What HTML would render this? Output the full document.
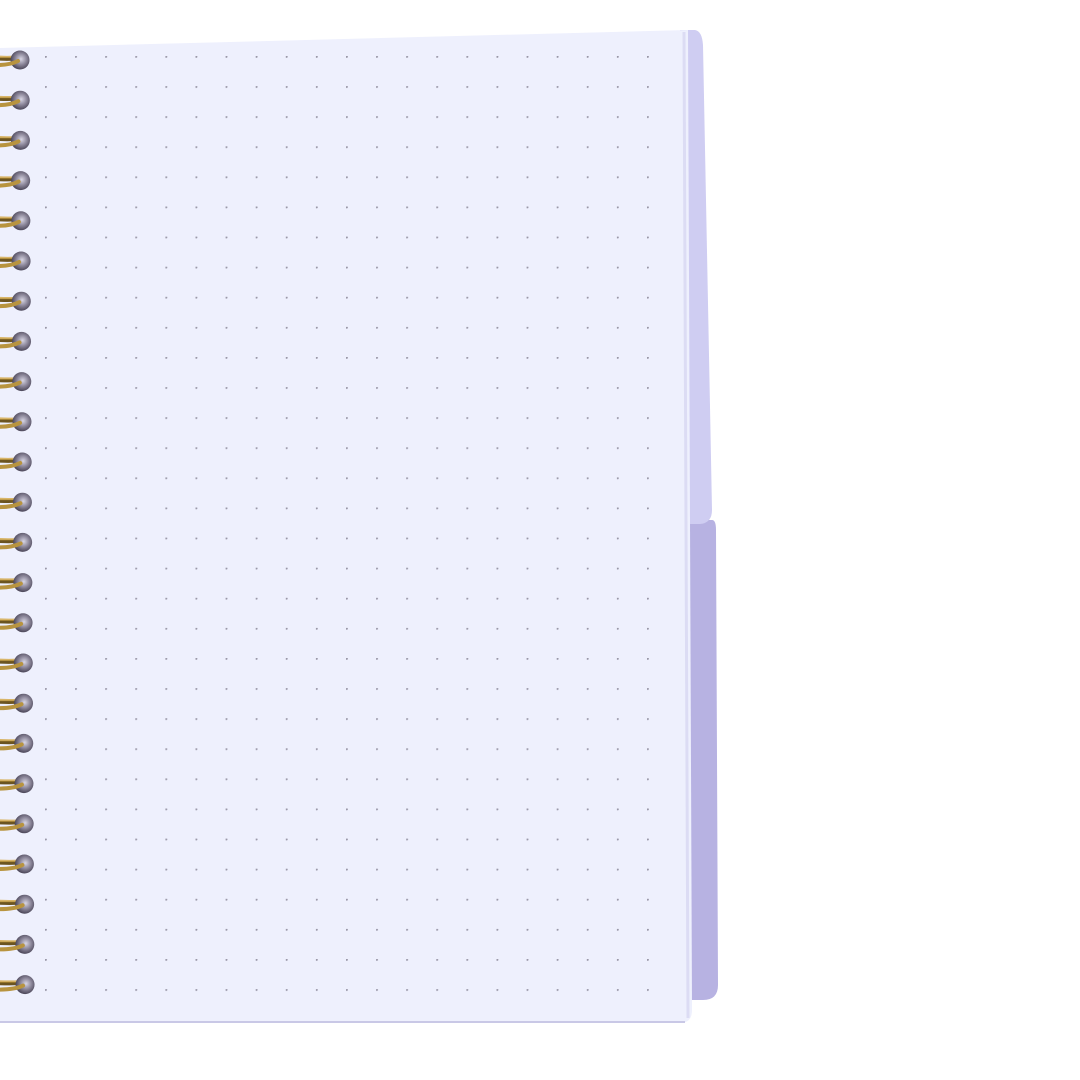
<!DOCTYPE html>
<html><head><meta charset="utf-8"><style>
html,body{margin:0;padding:0;background:#fff;width:1080px;height:1080px;overflow:hidden}
</style></head><body>
<svg width="1080" height="1080" viewBox="0 0 1080 1080" xmlns="http://www.w3.org/2000/svg">
<defs>
<pattern id="dots" x="45" y="56" width="30.1" height="30.1" patternUnits="userSpaceOnUse">
<circle cx="0.8" cy="0.8" r="1.1" fill="#9a98a8"/>
</pattern>
<radialGradient id="hole" cx="0.55" cy="0.45" r="0.6">
<stop offset="0" stop-color="#d8d6e4"/><stop offset="0.5" stop-color="#8a8598"/><stop offset="1" stop-color="#3f3a4c"/>
</radialGradient>
<linearGradient id="gold" x1="0" y1="0" x2="0" y2="1">
<stop offset="0" stop-color="#d9b66a"/><stop offset="0.5" stop-color="#a9852f"/><stop offset="1" stop-color="#6b5420"/>
</linearGradient>
</defs>
<path d="M690 520 L712 520 Q716 520 716 530 L718 985 Q718 1000 703 1000 L690 1000 Z" fill="#b7b2e2"/>
<path d="M680 30 L695 30 Q702 31 703 45 L712 510 Q712 523 700 524 L688 524 Z" fill="#cfcdf2"/>
<path d="M0 48 L688 30 L692 1010 Q692 1023 680 1023 L0 1023 Z" fill="#eef0fd"/>
<rect x="40" y="50" width="625" height="948" fill="url(#dots)"/>
<line x1="684" y1="32" x2="688" y2="1018" stroke="#dcdcf4" stroke-width="3"/>
<line x1="0" y1="1022" x2="685" y2="1022" stroke="#c9c8e6" stroke-width="2"/>
<g id="rings"></g>
</svg>
<script>
var g=document.getElementById('rings'),s='';
for(var i=0;i<24;i++){var y=60+i*40.2,x=20+i*0.22;
s+='<path d="M-2 '+(y-2)+' Q'+(x-8)+' '+(y-1)+' '+(x+2)+' '+(y-3)+'" stroke="url(#gold)" stroke-width="5" fill="none" stroke-linecap="round"/>';
s+='<circle cx="'+x+'" cy="'+y+'" r="9.5" fill="url(#hole)"/>';
s+='<path d="M-2 '+(y+5)+' Q'+(x-10)+' '+(y+5)+' '+(x-2)+' '+(y+1)+'" stroke="#b8943f" stroke-width="4" fill="none" stroke-linecap="round"/>';}
g.innerHTML=s;
</script>
</body></html>
